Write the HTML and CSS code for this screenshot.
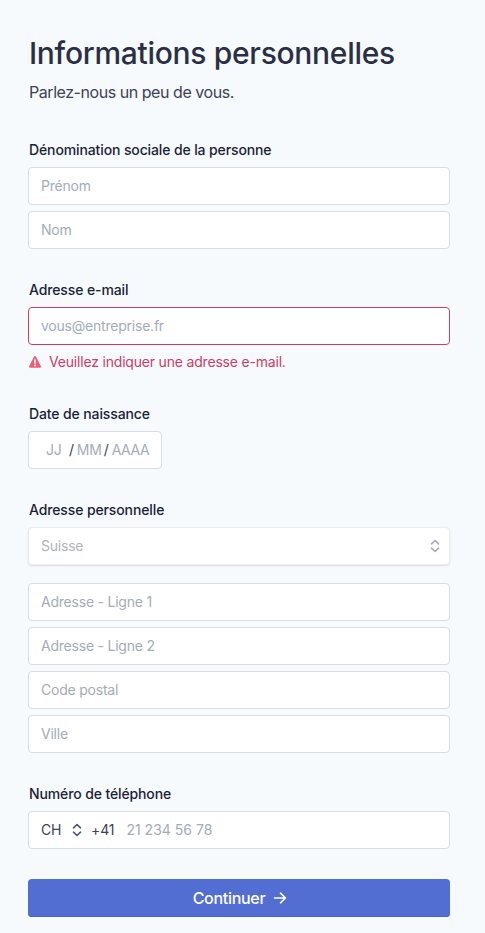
FILE: index.html
```html
<!DOCTYPE html>
<html lang="fr">
<head>
	<meta charset="utf-8">
	<title>Informations personnelles</title>
	<link rel="stylesheet" href="styles.css">
</head>
<body>
	<form class="page">
		<h1>Informations personnelles</h1>
		<p class="intro">Parlez-nous un peu de vous.</p>

		<div class="field name">
			<label for="first_name">Dénomination sociale de la personne</label>
			<input id="first_name" type="text" placeholder="Prénom">
			<input type="text" placeholder="Nom">
		</div>

		<div class="field email">
			<label for="email">Adresse e-mail</label>
			<input id="email" class="invalid" type="text" placeholder="vous@entreprise.fr">
			<div class="error">
				<svg width="12" height="12" viewBox="0 0 12 12">
					<path d="M5.1 .6a1 1 0 0 1 1.8 0l5 9.6a1 1 0 0 1-.9 1.5H1a1 1 0 0 1-.9-1.5z" fill="#ed5f74"/>
					<path d="M6 4v3" stroke="#fff" stroke-width="1.6" stroke-linecap="round"/>
					<circle cx="6" cy="9.4" r=".9" fill="#fff"/>
				</svg>
				<span>Veuillez indiquer une adresse e-mail.</span>
			</div>
		</div>

		<div class="field birth">
			<label for="day">Date de naissance</label>
			<div class="box date">
				<input id="day" class="day" type="text" placeholder="JJ">
				<span>/</span>
				<input class="month" type="text" placeholder="MM">
				<span>/</span>
				<input class="year" type="text" placeholder="AAAA">
			</div>
		</div>

		<div class="field address">
			<label>Adresse personnelle</label>
			<div class="box country">
				<span>Suisse</span>
				<svg width="10" height="14" viewBox="0 0 10 14"><path d="M1.5 4.8 5 1.5 8.5 4.8M1.5 9.2 5 12.5 8.5 9.2"/></svg>
			</div>
			<input type="text" placeholder="Adresse - Ligne 1">
			<input type="text" placeholder="Adresse - Ligne 2">
			<input type="text" placeholder="Code postal">
			<input type="text" placeholder="Ville">
		</div>

		<div class="field phone_field">
			<label for="phone">Numéro de téléphone</label>
			<div class="box phone">
				<span class="code">CH</span>
				<svg width="10" height="14" viewBox="0 0 10 14"><path d="M1.5 4.8 5 1.5 8.5 4.8M1.5 9.2 5 12.5 8.5 9.2"/></svg>
				<span class="prefix">+41</span>
				<input id="phone" type="text" placeholder="21 234 56 78">
			</div>
		</div>

		<button type="button">
			<span>Continuer</span>
			<svg width="14" height="12" viewBox="0 0 14 12"><path d="M1.5 6h11M7.5 1.2 12.5 6 7.5 10.8"/></svg>
		</button>
	</form>
</body>
</html>
```
FILE: styles.css
```css
* {
	box-sizing: border-box;
}
body {
	margin: 0;
	background-color: #f6fafd;
	color: #1a1f36;
	font-family: Inter, "Liberation Sans", sans-serif;
	font-size: 14px;
}
.page {
	width: 422px;
	margin-left: 28px;
	padding-top: 33px;
}
h1 {
	margin: 0 0 0 1px;
	color: #2a2f45;
	font-size: 30px;
	font-weight: 500;
	line-height: 40px;
	letter-spacing: -0.3px;
	white-space: nowrap;
}
.intro {
	margin: 7px 0 0 1px;
	font-size: 16px;
	line-height: 24px;
	letter-spacing: -0.45px;
	color: #3c4257;
}
.field {
	display: flex;
	flex-direction: column;
	gap: 6px;
	margin-top: 31px;
}
.name {
	margin-top: 36px;
}
label {
	margin: 0 0 1px 1px;
	line-height: 20px;
	font-weight: 500;
	letter-spacing: -0.12px;
}
input, .box {
	width: 100%;
	height: 38px;
	padding: 0 12px 2px;
	border: 1px solid #d8dce3;
	border-radius: 4px;
	background-color: #fff;
	color: #3c4257;
	font: inherit;
	letter-spacing: -0.22px;
}
input::placeholder {
	color: #a3acb9;
	opacity: 1;
}
.invalid {
	border-color: #cd3d64;
}
.error {
	display: flex;
	align-items: center;
	gap: 8px;
	margin: -1px 0 1px 1px;
	height: 22px;
	color: #cd3d64;
	letter-spacing: -0.19px;
}
.error svg {
	margin-top: 2px;
}
.box {
	display: flex;
	align-items: center;
	padding-bottom: 0;
}
.box input {
	height: 34px;
	padding: 0;
	border: 0;
	background: none;
}
/* text sits a touch above the middle of the box */
.box span, .box input {
	margin-bottom: 2px;
}
.box svg {
	flex: none;
	fill: none;
	stroke: #4f566b;
	stroke-width: 1.6;
	stroke-linecap: round;
	stroke-linejoin: round;
}
.date {
	width: 134px;
}
.country {
	justify-content: space-between;
	margin-bottom: 12px;
	padding-right: 9px;
	border-color: #e8ecf0;
	box-shadow: 0 1px 2px rgba(60, 66, 87, 0.14);
	color: #b1b3bc;
}
.box.country svg {
	stroke: #a7a8b5;
}
.phone .code {
	flex: none;
	width: 31px;
}
.phone .prefix {
	flex: none;
	margin: 0 12px 2px 9px;
	letter-spacing: -0.1px;
}
.phone input {
	letter-spacing: 0;
}
.date input {
	flex: none;
}
.date .day {
	width: 23px;
	margin-left: 5px;
}
.date .month {
	width: 27px;
	margin-left: 3px;
}
.date .year {
	width: 40px;
	margin-left: 3px;
	letter-spacing: -0.4px;
}
button {
	display: flex;
	align-items: center;
	justify-content: center;
	gap: 8px;
	width: 100%;
	height: 38px;
	margin-top: 30px;
	padding: 0 5px 0 7px;
	border: 0;
	border-radius: 4px;
	background-color: #536ed3;
	box-shadow: inset 0 -1px 0 #4a63c4, 0 1px 2px rgba(60, 66, 87, 0.08);
	color: #fff;
	font: 500 16px Inter, sans-serif;
	letter-spacing: -0.3px;
}
button svg {
	fill: none;
	stroke: #fff;
	stroke-width: 1.6;
	stroke-linecap: round;
	stroke-linejoin: round;
}
```
